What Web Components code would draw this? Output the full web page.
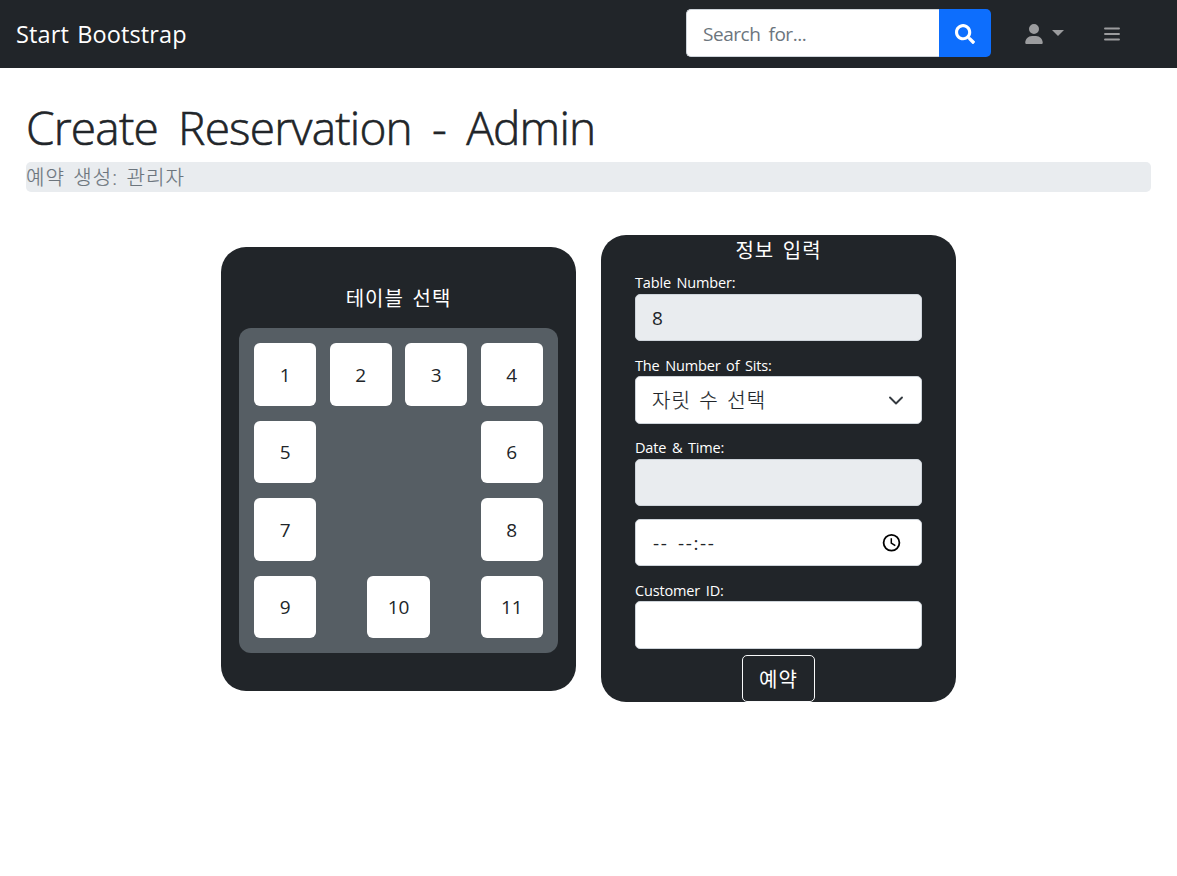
<!DOCTYPE html>
<html lang="ko">
<head>
<meta charset="utf-8">
<title>Create Reservation - Admin</title>
<style>
body{margin:0;background:#fff;color:#212529;font:19px/30px "Open Sans","Noto Sans CJK KR",sans-serif}
</style>
</head>
<body>
<reservation-page></reservation-page>
<script>
const define = (name, html) => customElements.define(name, class extends HTMLElement {
  constructor() {
    super();
    this.attachShadow({ mode: 'open' }).innerHTML = '<style>*{box-sizing:border-box}.ko{font-size:20px;letter-spacing:1.05px;word-spacing:2.2px}</style>' + html;
  }
});

define('top-bar', `
<style>
:host{display:flex;align-items:center;height:68px;box-sizing:border-box;background:#212529;padding:0 56px 2px 16px;color:#fff}
.brand{font-size:23.5px;word-spacing:2px;letter-spacing:.12px;margin-right:auto;padding-top:1px}
.search{display:flex;width:305px;height:48px;flex:none}
.field{flex:1;background:#fff;border:1px solid #ced4da;border-right:0;border-radius:5px 0 0 5px;color:#6c757d;padding:10px 16px 0;line-height:28px;letter-spacing:-.45px;word-spacing:3.5px}
.go{width:52px;background:#0d6efd;border-radius:0 5px 5px 0;display:grid;place-items:center;padding-top:1px}
.user{display:flex;align-items:center;margin-left:33.5px;width:39.5px;gap:9px;color:#9b9c9e;padding-top:1px}
.menu{margin-left:39px;width:18px;display:flex;padding-top:1px}
svg{display:block;flex:none}
</style>
<span class="brand">Start Bootstrap</span>
<div class="search"><div class="field">Search for...</div><div class="go"><svg width="20" height="20" viewBox="0 0 512 512" fill="#fff"><path d="M505 442.700 405.300 343c-4.500-4.500-10.600-7-17-7H372c27.600-35.300 44-79.700 44-128C416 93.100 322.900 0 208 0S0 93.100 0 208s93.100 208 208 208c48.300 0 92.700-16.400 128-44v16.300c0 6.400 2.500 12.500 7 17l99.700 99.700c9.400 9.400 24.600 9.400 33.900 0l28.300-28.300c9.400-9.400 9.400-24.600.1-34zM208 336c-70.700 0-128-57.200-128-128 0-70.700 57.200-128 128-128 70.700 0 128 57.200 128 128 0 70.700-57.200 128-128 128z"/></svg></div></div>
<div class="user"><svg width="18" height="20" viewBox="0 0 448 512" fill="currentColor"><path d="M224 256A128 128 0 1 0 224 0a128 128 0 0 0 0 256zm50.700 48H173.300C77.600 304 0 381.600 0 477.300 0 496.500 15.500 512 34.700 512h378.700c19.100 0 34.600-15.500 34.600-34.700C448 381.600 370.400 304 274.700 304z"/></svg><svg width="12" height="8" viewBox="0 0 12 8"><path fill="currentColor" d="M0 0h12L6 6z"/></svg></div>
<div class="menu"><svg width="18" height="14" viewBox="0 0 18 14"><path stroke="#9b9c9e" stroke-width="1.900" stroke-linecap="round" d="M2 1.500h14M2 7h14M2 12.500h14"/></svg></div>
`);

define('page-heading', `
<style>
:host{display:block;padding:29px 26px 0}
h1{margin:0;font-size:46px;line-height:60px;font-weight:300;-webkit-text-stroke:.6px #212529;letter-spacing:-.8px;word-spacing:9px;height:65px}
.crumb{height:30px;line-height:30px;padding-top:1px;border-radius:5px;background:#e9ecef;color:#6c757d;font-weight:300;-webkit-text-stroke:.2px #6c757d}
</style>
<h1>Create Reservation - Admin</h1><div class="crumb ko"><slot></slot></div>
`);

define('table-seat', `
<style>
:host{display:grid;place-items:center;width:62.4px;height:62.5px;box-sizing:border-box;background:#fff;border-radius:6px;color:#212529;padding-top:1px}
</style>
<span><slot></slot></span>
`);

define('table-picker', `
<style>
:host{display:block;box-sizing:border-box;width:355px;height:443.5px;margin-top:.5px;border-radius:25px;background:#212529;padding:37px 18px 0}
.title{height:44px;color:#fff;text-align:center}
.floor{background:#565e64;border-radius:12px;height:325px;padding:15px;display:flex;flex-direction:column;gap:15px}
.row{display:flex;justify-content:space-between}
</style>
<div class="title ko">테이블 선택</div>
<div class="floor">
<div class="row"><table-seat>1</table-seat><table-seat>2</table-seat><table-seat>3</table-seat><table-seat>4</table-seat></div>
<div class="row"><table-seat>5</table-seat><table-seat>6</table-seat></div>
<div class="row"><table-seat>7</table-seat><table-seat>8</table-seat></div>
<div class="row"><table-seat>9</table-seat><table-seat>10</table-seat><table-seat>11</table-seat></div>
</div>
`);

define('form-box', `
<style>
:host{display:flex;align-items:center;justify-content:space-between;box-sizing:border-box;height:47.5px;margin-bottom:12.5px;padding:0 16px;border:1px solid #ced4da;border-radius:5px;background:#fff;color:#212529}
:host([readonly]){background:#e9ecef}
</style>
<slot></slot>
`);

define('reservation-form', `
<style>
:host{display:block;box-sizing:border-box;width:355px;height:467px;border-radius:25px;background:#212529;padding:0 34px;color:#fff}
.title{height:36.25px;padding-top:1px;text-align:center}
label{display:block;height:22.5px;line-height:23px;font-size:14.5px;letter-spacing:-.15px;word-spacing:2px}
svg{display:block}
.last{margin-bottom:6.25px}
.light{font-weight:300;padding-top:2px;-webkit-text-stroke:.2px #212529}
.time{white-space:pre;letter-spacing:1.600px;word-spacing:3px;padding-left:1px}
.submit{width:73px;height:47px;margin:0 auto;border:1px solid #f8f9fa;border-radius:5px;text-align:center;line-height:47px}
</style>
<div class="title ko">정보 입력</div>
<label>Table Number:</label><form-box readonly><span>8</span></form-box>
<label>The Number of Sits:</label><form-box><span class="ko light">자릿 수 선택</span><svg width="18" height="20" viewBox="0 0 18 20"><path fill="none" stroke="#343a40" stroke-linecap="round" stroke-linejoin="round" stroke-width="1.900" d="m3 7.500 6 6 6-6"/></svg></form-box>
<label>Date &amp; Time:</label><form-box readonly></form-box>
<form-box><span class="time">-- --:--</span><svg width="28" height="20" viewBox="0 0 28 20" fill="none" stroke="#000"><circle cx="14.500" cy="9.700" r="7.900" stroke-width="1.800"/><path stroke-width="1.500" d="M14.300 5.200v5l4 2.500"/></svg></form-box>
<label>Customer ID:</label><form-box class="last"></form-box>
<div class="submit ko">예약</div>
`);

define('reservation-page', `
<style>
:host{display:block}
main{display:flex;justify-content:center;align-items:center;gap:25px;padding-top:43px}
</style>
<top-bar></top-bar>
<page-heading>예약 생성: 관리자</page-heading>
<main><table-picker></table-picker><reservation-form></reservation-form></main>
`);
</script>
</body>
</html>
